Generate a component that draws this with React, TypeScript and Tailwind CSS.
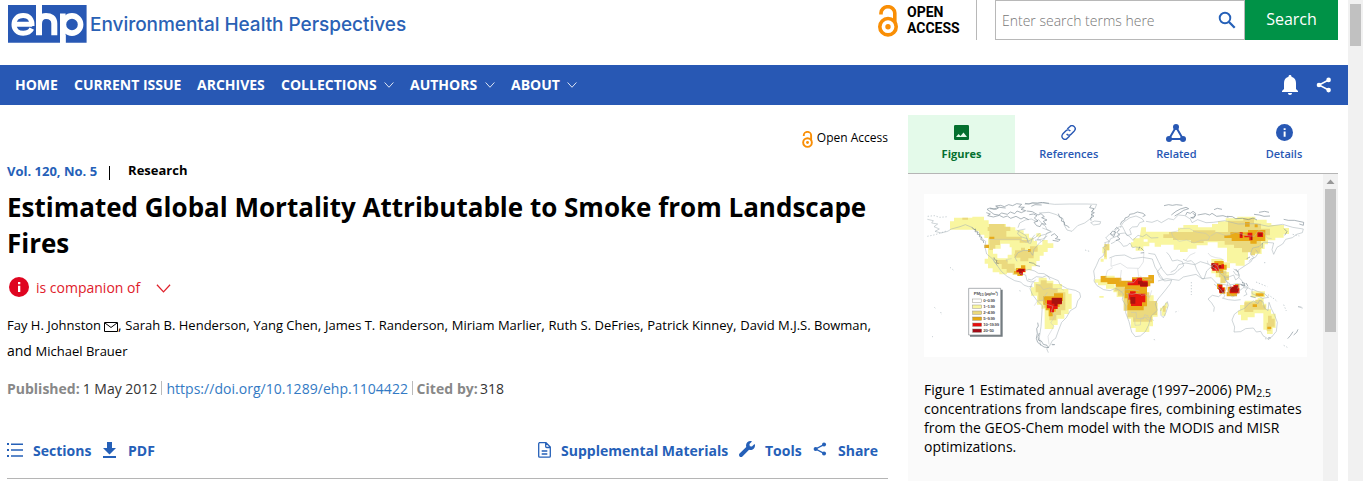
import type { ReactNode } from 'react';

function OpenAccessIcon({ className }: { className: string }) {
  return (
    <svg viewBox="0 0 20 32" className={className} fill="none" stroke="#f98e05">
      <circle cx="10" cy="21.7" r="8.2" strokeWidth="3.6" />
      <path d="M3 9.500V8a6.900 6.300 0 0 1 13.800 0v10" strokeWidth="3.600" />
      <circle cx="10" cy="21.700" r="2.700" fill="#f98e05" stroke="none" />
    </svg>
  );
}

function Chevron({ className }: { className: string }) {
  return (
    <svg viewBox="0 0 16 10" className={className} fill="none" stroke="currentColor">
      <path d="m.7 .8 7.300 8 7.300-8" strokeWidth="1.400" />
    </svg>
  );
}

function ShareIcon({ className }: { className: string }) {
  return (
    <svg viewBox="0 0 16 16" className={className} fill="currentColor">
      <path d="M12.600 3 3 8l9.600 5" fill="none" stroke="currentColor" strokeWidth="1.500" />
      <circle cx="12.600" cy="2.900" r="2.300" />
      <circle cx="3" cy="8" r="2.300" />
      <circle cx="12.600" cy="13.100" r="2.300" />
    </svg>
  );
}

function InfoIcon({ className }: { className: string }) {
  return (
    <svg viewBox="0 0 20 20" className={className}>
      <circle cx="10" cy="10" r="10" fill="currentColor" />
      <path d="M9 5h2.300v2.200H9zM9 8.800h2.300V15H9z" fill="#fff" />
    </svg>
  );
}

function Logo() {
  return (
    <svg viewBox="0 0 79 38" className="h-[38px] w-[79px] shrink-0">
      <path d="M0 0h78.600v37.700H0z" fill="#2858b4" />
      <path d="M28 0h6v10h-6zM52 30h5.600v8H52z" fill="#fff" />
      <g fill="none" stroke="#fff">
        <path d="M6 19.300h18.200M24 21C24.300 14 21 10.600 15.200 10.600S6 14.500 6 19.500s3.500 8.800 9.200 8.800c4 0 7-1.500 8.600-4.600" strokeWidth="5" />
        <path d="M31 0v30.300M31 19c0-5.500 2.500-8 7-8s8.300 2 8.300 7.500v11.800" strokeWidth="6" />
        <path d="M54.800 8.500V38" strokeWidth="5.600" />
        <ellipse cx="64" cy="19.500" rx="8.600" ry="8.600" strokeWidth="5.600" />
      </g>
    </svg>
  );
}

const navItems = [
  { label: 'HOME', width: 'w-[59px]', menu: false },
  { label: 'CURRENT ISSUE', width: 'w-[123px]', menu: false },
  { label: 'ARCHIVES', width: 'w-[84px]', menu: false },
  { label: 'COLLECTIONS', width: 'w-[129px]', menu: true },
  { label: 'AUTHORS', width: 'w-[101px]', menu: true },
  { label: 'ABOUT', width: 'w-[82px]', menu: true },
];

const coAuthors = [
  'Sarah B. Henderson',
  'Yang Chen',
  'James T. Randerson',
  'Miriam Marlier',
  'Ruth S. DeFries',
  'Patrick Kinney',
  'David M.J.S. Bowman',
];

function Tab({ label, active, children }: { label: string; active?: boolean; children: ReactNode }) {
  return (
    <button
      className={
        active
          ? 'flex h-[58px] w-[107px] flex-col items-center bg-[#e4faea] pt-[7px] text-[11px] leading-[16px] font-bold text-[#04702f]'
          : 'flex h-[58px] w-[107.600px] flex-col items-center pt-[7px] text-[11px] leading-[16px] font-semibold text-[#2858b4]'
      }
    >
      <span className="mb-[2px] flex h-[22px] items-center justify-center">{children}</span>
      {label}
    </button>
  );
}

const legend = [
  { y: 320, color: '#fff', label: '0–0.99' },
  { y: 338, color: '#f9f6a0', label: '1–1.99' },
  { y: 356, color: '#ebd97e', label: '2–4.99' },
  { y: 374, color: '#e5a812', label: '5–9.99' },
  { y: 392, color: '#e60d0d', label: '10–19.99' },
  { y: 410, color: '#a20b18', label: '20–50' },
];

function SmokeMap() {
  return (
    <svg viewBox="0 0 1149 489" className="block h-[163px] w-[383px] bg-white" fill="none">
      {/* 1–1.99 */}
      <g fill="#f9f6a0">
        <path d="M78 82h12v-11h55v-3h35v11h14v11h52v10h28v9h25v10h16v12h14v10h10v11h16v-14h16v10h17v14h-17v12h-12v11h-12v16h-10v16h-14v12h-18v9h-28v-10h-28v13h-23v-6h-20v-12h-14v-14h-10v-15h10v-62h-11v-10h-16v-10h-12v-5H78z" />
        <path d="M337 118h14v10h-14zM321 280h9v-16h14v-13h24v9h20v10h26v15h19v14h10v46h-9v15h-13v14h-20v19h-12v12h-27v-61h-10v-12h-13v-27h-18z" />
        <path d="M541 150h16v19h-8v27h-9v-18h-5v-19h6zM530 194h9v9h-9zM512 256h20v-11h40v39h-26v-10h-24v-8h-10zM526 306h13v5h-13z" />
        <path d="M652 100h14v13h96v-12h16v-8h44v7h42v-10h18v-8h23v-9h35v-5h54v9h34v10h14v6h38v9h15v18h-16v11h-25v8h-22v12h-10v14h-9v15h-24v-13h-17v31h-10v17h-27v-7h-17v-5h-9v-42h-28v-16h-30v9h-33v10h-27v10h-23v-7h-19v-15h-38v6h-19v-12h-21v-10h-25zM628 133h31v10h17v14h-18v13h-23v-10h-14v-15h7z" />
        <path d="M568 280h54v14h26v10h41v22h12v42h-14v29h-11v17h-41v-12h-14v-28h-10v-50h-13v-15h-20v-14h-10zM714 337h9v-11h8v17h-6v22h-12v-14h-5v-10h6z" />
        <path d="M862 195h34v10h22v17h-11v12h8v25h-12v9h-14v-18h-14v-12h-13zM982 292h41v18h-41zM948 333h14v-13h39v-8h18v17h8v17h14v13h14v43h-9v18h-17v-13h-11v-49h-26v12h-21v9h-20v-17h-9v-12h6z" />
      </g>
      {/* 2–4.99 */}
      <g fill="#ebd97e">
        <path d="M195 90h47v8h17v13h-12v17h46v10h20v8h-26v-7h-59v14h-14v15h-18v-57h-5V99h4zM115 71h17v6h-17zM273 169h18v-8h12v8h15v-12h23v16h-12v20h-16v9h-24v-11h-18v-12h2zM216 198h35v11h21v15h13v18h-19v-6h-18v-11h-15v-15h-17z" />
        <path d="M335 271h15v-12h18v9h18v15h15v12h23v54h-13v14h-14v16h-21v-38h-17v-19h-16v-27h-8zM541 151h14v18h-8v21h-6z" />
        <path d="M718 121h17v-7h72v-5h67v5h38V80h46v-7h32v16h21v15h27v20h-15v14h-12v27h-24v10h-33v-13h-24v-10h-28v-11h-63v6h-38v-9h-54v-6h-29zM980 160h29v16h-16v8h-13zM885 232h22v12h8v14h-10v9h-15v-17h-5zM580 269h21v14h21v12h54v26h23v42h-15v20h-57v-13h-17v-20h-11v-45h-17v-13h-12zM717 335h8v18h-8zM961 325h33v-8h21v17h10v13h-37v7h-27zM1032 365h11v9h9v24h-12v12h-12v-24h4z" />
      </g>
      {/* 5–9.99 */}
      <g fill="#e8aa18">
        <path d="M196 128h15v7h-15zM181 152h14v10h-14zM312 165h8v9h-8zM276 222h15v-8h13v19h-8v13h-16v-7h-10v-8h6zM358 307h32v-9h27v23h-10v18h-12v14h-9v14h-12v-18h-9v-17h-7z" />
        <path d="M530 246h17v5h45v9h32v-10h49v-7h17v25h-11v9h-10v60h-10v12h-49v-36h-8v-35h-27v-8h-25v-5h-20zM901 124h18v-9h53v-7h52v33h-26v8h-19v-8h-56v-9h-22zM963 84h14v14h-14zM992 91h9v9h-9zM871 201h28v11h9v15h-10v9h-22v-18h-8v-10h3zM879 270h16v10h9v19h-17v-14h-8zM911 278h22v-8h13v28h-7v9h-31v-13h3zM995 298h24v9h-24zM986 331h13v8h-13zM1030 398h12v7h-12z" />
      </g>
      {/* 10–19.99 */}
      <g fill="#e8170c">
        <path d="M283 224h21v10h-7v9h-9v-8h-11v-6h6zM369 319h15v-8h29v20h-12v14h-11v10h-12v-12h-9zM611 265h14v-9h13v-5h16v9h17v18h-22v-4h-38zM618 292h17v7h29v26h-10v11h-33v-19h-8v-19h5zM947 115h9v17h-9zM961 125h10v-9h14v23h-9v-9h-15zM1000 115h17v14h-17zM863 208h20v9h9v-6h8v13h-15v6h-20zM883 272h12v9h6v15h-15v-9h-3zM917 278h11v-5h15v10h3v15h-29z" />
      </g>
      {/* 20–50 */}
      <g fill="#aa120e">
        <path d="M283 225h17v7h-7v8h-8v-8h-5v-4h3zM383 312h31v17h-14v7h-9v-7h-8zM642 260h14v5h15v12h-23v-7h-6zM619 309h15v20h-15zM981 125h4v13h-4zM1003 118h11v9h-11zM862 208h10v16h-10zM884 213h8v10h-8zM885 279h8v9h7v8h-13zM918 279h13v-3h11v19h-22zM950 120h4v7h-4z" />
      </g>
      <path fill="#fff" d="M230 149h27v11h6v22h-12v11h-31v-14h-13v-15h23z" />
      {/* Continental outlines */}
      <g stroke="#a5afb6" strokeWidth="1.600" strokeLinejoin="round">
        <path d="M10 76l18 4-5 7 18 3-11 8 16 7-13 7 18 5 20-5 11-7 26-7 16-6 20 8 22 18 10 18 9 6-2 18 5 20 17 14 15 21 12 17 17 15 23 13 18 4 9 9 14 5 12-1M207 191l4 12 9 12m59-13-6-12 9-14 17-7 18 1 9 14 4-18 18-21 13-9 7-18 17-5m-107-5 28 17 5 17 24-12 12-13" />
        <path d="M282 101l5-14 17-9 18-3 14 7 8-5 12 14 8 5 5 11 12 5-17 9-16 4-8 12 11 2m-47-34-20 4-3 11 12 9 17 5 3 13 7 1 6-18 7-8m22-20 22 8m-44 29 23-4 14-9" />
        <path d="M286 238l19 5 4 17 12 4 8-2m-27-32 13-4 17 5 11 7 17 1 13 8 5 10M312 255l10 3 15-10 18 2 12-5 19 8 17 7 5 12 22 12 24 5 13 7 3 13-9 12-5 19-17 10-12 21-14 14-9 23-9 25-10 7-9 17-8 7 5 12M335 257l-11 12-6 15 7 17 15 20 15 14-2 34-2 29-5 32 4 25" />
        <path d="M302 31l44-5 46 5 45-1 52 0 29 1-5 12-9 9-2 20-20 15-21 8-17 17-15-4-8-14-4-20-20-12-22-7-30 2M500 86l12-5 18 2-2 7-19 3z" />
        <path d="M587 96l-15 15-3 12-11-4-13 13 11 10-14 4 5 9-10 5 6 9-5 16-12 9-9 21-8 16 3 20-2 10 9 14 20 12 19 3 17-7 15 8 8 9-3 17 11 19-1 20 10 27 8 31 11 14 15-2 15-13 10-20 7-26 19-18-6-19 8-15 20-24 17-22 4-11-22 3-12-17-16-25-8-24-29-5-31 4-23-11-28 2-18 7" />
        <path d="M588 100l11-16 19-13 18-5 18 8 6 8-13 4-7 12-15 1-8 7 5 15-13 4-9-18-5-10zM552 150l8-16 18-7 8-8 16-2 15 11 10 11 6-7 9-8 14 4 11-7 14 11 22-1m-142 18 9-4 9-8 12 10 7 10 11-2 9-8 8 14 9-2 16 2m22 17 20 3 10 21 12 24 14 17 22-3 11-11 17-13-4-13-15-5-15 3-9-17-8-9m49 21 14 6 11-2 10 10 6 17 16 27 6 1 8-24 22-21 10 5 9 23 12 10 4 13 12 8 5 13" />
        <path d="M666 82l18 3 16-6 12 7 21-12 16 3 14-14 20 2 16 10 5 11 17-9 25 9 22-1 34-5 40 10 53-1 38 8 43-6 30 9 32 5-3 11-17 5-13 10-20 5-9 14-17 10-10 21-5-14 5-20-30-3-14 14-19 4-7 18 10 10-9 14-20 13-18 12 4 20-11 9-6-15-17 7-10-1 9 20-5 19-22 20-19-4-13 11 11 12 8 13-2 13m-167-92 26-7 37 5 13-10 38-8 18 13 28-3 16 17 34 6 28-5 21 5 19 12m-240-51 15-8 9-15 21-5 27 5 17-9 24 7 25 17m-166-8-12 14 7 17 11 9" />
        <path d="M870 270l18 14 14 20-3 8m22-32-9 15 13 14 15-8 8-15m-3-16-4 14M894 312l19 5 19 2 18-2M929 225l12 8 5 11-11-2-7-11m15 18 11 11 5 14-12-4M948 290l9-9 14 1-7 9 5 10-10 5M984 285l16 7 20 6 14 12-18 3-14-7-18-7z" />
        <path d="M931 361l14-11 17-7 13-14 14-8 13 8 5-11 10 6 4 18 11 8 3-25 7 19 10 20 8 21-3 27-14 17-12 5-14-9-7-13-13 2-9-12-23 2-15 9-20 1 2-15-8-21z" />
        <path d="M710 348l10-12 10-13 3 11-7 21-8 16-7-7zM975 203l6-8 13-5 9-13-8-10" />
      </g>
      {/* Interior borders */}
      <g stroke="#bac1c5" strokeWidth="1.300">
        <path d="M195 136h93l18 9 17-5M250 203l-4-6 17-3m72 76 14 5 9 12 18-5 14 4 19-3 11 6m-50 6-12 17 5 17 24 8-6 17 13 11-14 22 10 9-18 31 3 24m-15-133-20 3-9 14" />
        <path d="M562 191l-1 26 28-9 21 14 35 1 13-19 2-31m-94 48-16 9-6 22m44 11 4-35m49-4 3 24-15 18-22 1m40-22 16 12 21 1m-96 41 11-11 24-2 23 5m-40 7 18 3 13-3 14 3m-30 54 16 1v17l21 2 4-13 12 4m-62-68 3 19-5 16m41-29 13-2 13 8 6-21m-32 84 20-4 19 11M632 372l1 22 16-1 2-22m13 1 14 9" />
        <path d="M746 126l-4-11 18-4 9-7 27-1 15 9 10 3 24 3 12 10-4 10-23 1-20 8-22-9-22 4-14-9zM786 198l12-15 16-7m38 1 8 9 15 5 14 2 12 6m-27 23 8 13 13-4 14 7m-56-25-3-13m10-74 18-11 28 10 29-10 36 10 20 2 12-17 17 5 9 17 14 2" />
      </g>
      {/* Rugged northern and southern coasts */}
      <g stroke="#657581" strokeWidth="2" opacity=".8" strokeLinejoin="round">
        <path d="M144 100l6 7 5-2-2 8 8 1-1 7 7 1-1 6 7 2-3 6 8 4 1 7M210 190l3 8 6 1-3 7 8 3" />
        <path d="M189 46l9-4 12 3 13-5-8-4 15-2 11 4 13-6 12 3 12-6 15 2-9 8 17 1-10 6 14 4-13 6-13-5-7 8-13-5-9 7-17-4-9 6-14-2-8-6zM187 56l12 4-8 5 17 4 18-5 12 6 12-4 10 7 16-6 15 8 9-5 14 7m-116-33 18 2 10-6 19 2M303 28l12 2 10-4 16 2 14-3 20 3M322 37l11-5 20 1M308 51l17 2 17 10 9-4 10 9-8 3 16 7-11 4 8 9-13-2-5 9-10-3-8-10 12-4-11-9 8-7-11-5-12 2M403 59l4 11 7 3-2 8 9 3 1 9 9 3 5 6M502 33l-5 8 13 3-7 9 8 3-9 6 8 4-10 6 1 8M381 125l10-6 11 10-8 5 14 3-5 5-17-3M315 205l14 3 7 6 12 3M341 386l2 10-5 8 2 15-3 14 4 12 9 7 10 7 14 2-5-7-11-3-6-10-8-2-2-11 4-11M383 451l10 1" />
        <path d="M589 92l4-9 9-5 1-6 11-4 3-7 12-2 11-5 17 4 7 6-8 4m-84 39 6-7 8 7-7 8 8 8-7 5 8 7-12 5m-17-20 7-9 9 3-6 14zM720 35l14-3 11 2 12-2 18 2M742 63l14-11 13-7 17-5 8 4-15 5-13 9-14 8M785 64l4-9 10 3 8-6 8 6-3 10-12 4M806 58l9 5-7 10-8-3M821 63l23-4 13 4 7-5 14 9 19-2 16 5M870 47l10-4 14 3M909 67l16 1 10 6 20-1 18 4 14-5 12 6M1005 55l17-3 13 3M990 61l16 2 14 4 18-1M1079 76l14 3 18 0 28 6-1 9-12-4M1080 104l9 9-7 11m-67 23-1 15m-36 27-10 5m-33 31 7 9m12 31 8 3-1 9-10-5m15-5 6 10m7 30 16 4M1122 338l11 2m-11 66-4 9-9 8m-2-10-8 12-8 9m-58-3 7 2M647 158l-3 9m7-5 8 8m1 6-10 1" />
      </g>
      <g stroke="#9eabb3" strokeWidth="1.700" strokeDasharray="4 5">
        <path d="M11 67l20-2 16 5 25-2M10 127l24-5 27-9 10-3M78 220l10 8M31 340l5 4m14 10 3 9M286 290l7 2M483 168l13 4M802 264v39M897 237l7 17M1032 302l19 13 10 9m18 8 8 19M996 264l34 14M1020 206h9m77-85 20 5M690 435l3 6M754 354l9-3M1023 434l17 4M1079 454l11 6M24 428h3M385 453h9M1133 344l7-5" />
      </g>
      <g>
        <path fill="#737b80" d="M229 287h7v141h-98v-6h91z" />
        <path fill="#fff" stroke="#858b8f" strokeWidth="2" d="M134 283h96v140h-96z" />
        <text x="149" y="303" fill="#555" textLength="73" className="font-['Liberation_Sans',sans-serif] text-[13px] font-bold">PM<tspan fontSize="9" dy="3">2.5</tspan><tspan dy="-3"> (µg/m³)</tspan></text>
        {legend.map((row) => (
          <g key={row.label}>
            <rect x="146" y={row.y - 5} width="27" height="10" fill={row.color} stroke="#8c887b" strokeWidth="1.300" />
            <text x="178" y={row.y + 5} fill="#555" className="font-['Liberation_Sans',sans-serif] text-[13px] font-bold tracking-[-1px]">{row.label}</text>
          </g>
        ))}
      </g>
    </svg>
  );
}

export default function App() {
  return (
    <div className="flex h-[481px] w-[1363px] overflow-hidden bg-white font-['Open_Sans',sans-serif] text-black">
      <div className="flex w-[1348px] shrink-0 flex-col">
        <header className="flex h-[65px] shrink-0 items-start pl-2">
          <div className="flex w-[870px] pt-[5px]">
            <Logo />
            <span className="ml-[3px] pt-[6px] font-['Inter',sans-serif] text-[19px] leading-[27px] font-[450] tracking-[-0.03px] whitespace-nowrap text-[#2a61b5]">Environmental Health Perspectives</span>
          </div>
          <OpenAccessIcon className="mt-[5px] h-8 w-5" />
          <div className="ml-[9px] w-[61px] pt-1 font-['Roboto',sans-serif] text-[14px] leading-4 font-bold">OPEN<br />ACCESS</div>
          <div className="h-10 w-[9px] border-r border-[#b8b8b8]" />
          <div className="ml-[18px] flex h-10 w-[250px] items-center justify-between border border-[#b8b8b8] pr-2 pl-[6px] text-[14px] font-light text-[#777]">
            <span className="whitespace-nowrap">Enter search terms here</span>
            <svg viewBox="0 0 18 18" className="h-[18px] w-[18px]" fill="none" stroke="#2560b8" strokeWidth="1.900">
              <circle cx="7" cy="7" r="5.300" /><path d="m11 11 5.700 5.700" strokeWidth="2.300" />
            </svg>
          </div>
          <button className="h-10 w-[93px] bg-[#009247] pb-[2px] text-[16px] text-white">Search</button>
        </header>
        <nav className="flex h-10 shrink-0 items-center bg-[#2858b4] pl-[15px] text-[14px] leading-5 font-bold text-white">
          {navItems.map((item) => (
            <div key={item.label} className={`flex shrink-0 items-center whitespace-nowrap ${item.width}`}>
              {item.label}
              {item.menu && <Chevron className="ml-[7.5px] h-[6px] w-[10px]" />}
            </div>
          ))}
          <svg viewBox="0 0 16 20" className="ml-[689px] h-5 w-4" fill="currentColor">
            <path d="M8 0c1 0 1.500.7 1.500 1.700C12.700 2.500 14 5 14 8v6l2 2v1H0v-1l2-2V8c0-3 1.300-5.500 4.500-6.300C6.500.7 7 0 8 0M6 18h4c0 1.300-.7 2-2 2s-2-.7-2-2" />
          </svg>
          <ShareIcon className="ml-[18px] h-4 w-4" />
        </nav>
        <main className="flex min-h-0 flex-1 gap-5 pl-[7px]">
          <article className="w-[881px] shrink-0">
            <div className="flex h-[52px] items-end justify-end pb-[10px] text-[12px] leading-[18px]">
              <OpenAccessIcon className="mr-1 mb-[-1px] h-[17px] w-[11px]" />Open Access
            </div>
            <div className="flex h-[28px] items-center text-[13px] font-bold">
              <span className="mt-px text-[#2560b8]">Vol. 120, No. 5</span>
              <span className="mt-1 ml-3 h-[14px] w-px bg-black" />
              <span className="ml-[18px]">Research</span>
            </div>
            <h1 className="mt-1 text-[26px] leading-9 font-bold">Estimated Global Mortality Attributable to Smoke from Landscape Fires</h1>
            <div className="mt-4 flex h-5 items-center pl-[2px] text-[14px] text-[#e0202a]">
              <InfoIcon className="h-5 w-5 text-[#df0520]" />
              <span className="ml-[7px]">is companion of</span>
              <Chevron className="mt-[2px] ml-4 h-[9px] w-[15px]" />
            </div>
            <div className="mt-[15px] h-[52px] text-[14px] leading-[26px] whitespace-nowrap">
              <span className="text-[13px]">Fay H. Johnston</span>
              <svg viewBox="0 0 14 10" className="ml-[3px] inline h-[10px] w-[14px] align-[-2px]" fill="none" stroke="currentColor"><path d="M.5.500h13v9H.5zM1 1l6 4.500L13 1" /></svg>
              {coAuthors.map((name) => (
                <span key={name}>, <span className="text-[13px]">{name}</span></span>
              ))}
              ,<br />
              and <span className="text-[13px]">Michael Brauer</span>
            </div>
            <div className="mt-3 flex h-6 items-center text-[14px] whitespace-nowrap text-[#333]">
              <b className="text-[#888]">Published:</b><span className="ml-[3px]">1 May 2012</span>
              <span className="mx-1 h-[14px] w-px bg-[#bbb]" />
              <span className="tracking-[0.035px] text-[#337ac4]">https://doi.org/10.1289/ehp.1104422</span>
              <span className="mr-1 ml-[3.5px] h-[14px] w-px bg-[#bbb]" />
              <b className="tracking-[0.06px] text-[#888]">Cited by:</b><span className="ml-[2px] tracking-[0.1px]">318</span>
            </div>
            <div className="mt-[38px] flex h-[41px] items-start border-b border-[#b5b5b5] text-[14px] leading-[26px] font-bold text-[#2560b8]">
              <svg viewBox="0 0 16 14" className="mt-[5px] h-[14px] w-4" fill="currentColor"><path d="M0 0h2v2H0zM4 .5h12V2H4zM0 6h2v2H0zM4 6.300h12v1.500H4zM0 12h2v2H0zM4 12.300h12v1.500H4z" /></svg>
              <span className="ml-[10px] w-[70px]">Sections</span>
              <svg viewBox="0 0 13 16" className="mt-1 h-4 w-[13px]" fill="currentColor"><path d="M4 0h5v6h4l-6.500 6.500L0 6h4zM0 14h13v2H0z" /></svg>
              <span className="ml-3">PDF</span>
              <div className="ml-auto flex">
                <svg viewBox="0 0 13 16" className="mt-1 h-4 w-[13px]" fill="none" stroke="currentColor" strokeWidth="1.300"><path d="M1 .7h7l4.300 4.300v9.200q0 1-1 1H1.700q-1 0-1-1V1.700q0-1 1-1M7.700 1v3.500q0 1 1 1H12M3.700 9h5.600M3.700 12h5.600" /></svg>
                <span className="ml-[10px] w-[178px]">Supplemental Materials</span>
                <svg viewBox="0 0 512 512" className="mt-[3px] h-4 w-4" fill="currentColor"><path d="M507.700 109.100c-2.200-9-13.500-12.100-20.100-5.500l-74.400 74.400-67.900-11.300L334 98.900l74.400-74.400c6.600-6.600 3.400-17.900-5.700-20.200-47.400-11.700-99.600.9-136.600 37.900-39.600 39.600-50.500 97.100-34 147.200L18.700 402.800c-25 25-25 65.500 0 90.500s65.500 25 90.500 0l213.200-213.200c50.100 16.700 107.500 5.700 147.400-34.200 37.100-37.100 49.700-89.300 37.900-136.800" /></svg>
                <span className="ml-[10px] w-[48px]">Tools</span>
                <ShareIcon className="mt-1 h-[14px] w-[14px]" />
                <span className="mr-[10px] ml-[11px]">Share</span>
              </div>
            </div>
          </article>
          <aside className="flex w-[430px] flex-col pt-[10px]">
            <div className="flex h-[59px] shrink-0 border-b border-[#b5b5b5]">
              <Tab label="Figures" active>
                <svg viewBox="0 0 15 15" className="mb-[2px] h-[15px] w-[15px]"><rect width="15" height="15" rx="1.300" fill="currentColor" /><path d="m2 12 2.500-3 2 2L9.500 7.500 13 12z" fill="#e4faea" /></svg>
              </Tab>
              <Tab label="References">
                <svg viewBox="0 0 15 15" className="mb-px h-[15px] w-[15px]" fill="none" stroke="currentColor" strokeWidth="1.400"><path d="M6.300 4.100 8.700 1.700a2.900 2.900 0 0 1 4.600 4.200L10.100 9.200a2.700 2.700 0 0 1-4.400-.4M8.700 10.900l-2.400 2.400a2.900 2.900 0 0 1-4.600-4.200l3.200-3.300a2.700 2.700 0 0 1 4.400.4" /></svg>
              </Tab>
              <Tab label="Related">
                <svg viewBox="0 0 20 18" className="h-[18px] w-5" fill="currentColor"><path d="M10 3 3 15h14z" fill="none" stroke="currentColor" strokeWidth="2" /><circle cx="10" cy="3" r="3" /><circle cx="3" cy="15" r="3" /><circle cx="17" cy="15" r="3" /></svg>
              </Tab>
              <Tab label="Details"><InfoIcon className="mb-px ml-px h-[17px] w-[17px]" /></Tab>
            </div>
            <div className="flex min-h-0 flex-1">
              <div className="w-[415px] bg-[#fafafa] pt-5 pl-4">
                <SmokeMap />
                <p className="mt-[23px] w-[390px] text-[14px] leading-[19px]">Figure 1 Estimated annual average (1997–2006) PM<sub className="bottom-[-2px] text-[10.5px]">2.5</sub><br />concentrations from landscape fires, combining estimates<br />from the GEOS-Chem model with the MODIS and MISR<br />optimizations.</p>
              </div>
              <div className="flex w-[15px] flex-col items-center bg-[#f1f1f1]">
                <svg viewBox="0 0 15 15" className="h-[15px] w-[15px]" fill="#989898"><path d="m7.500 5.500 4 4.500h-8z" /></svg>
                <div className="h-[143px] w-[11px] bg-[#c1c1c1]" />
              </div>
            </div>
          </aside>
        </main>
      </div>
      <div className="flex w-[15px] justify-center bg-[#f1f1f1] pt-1"><div className="h-[42px] w-[11px] bg-[#c1c1c1]" /></div>
    </div>
  );
}
